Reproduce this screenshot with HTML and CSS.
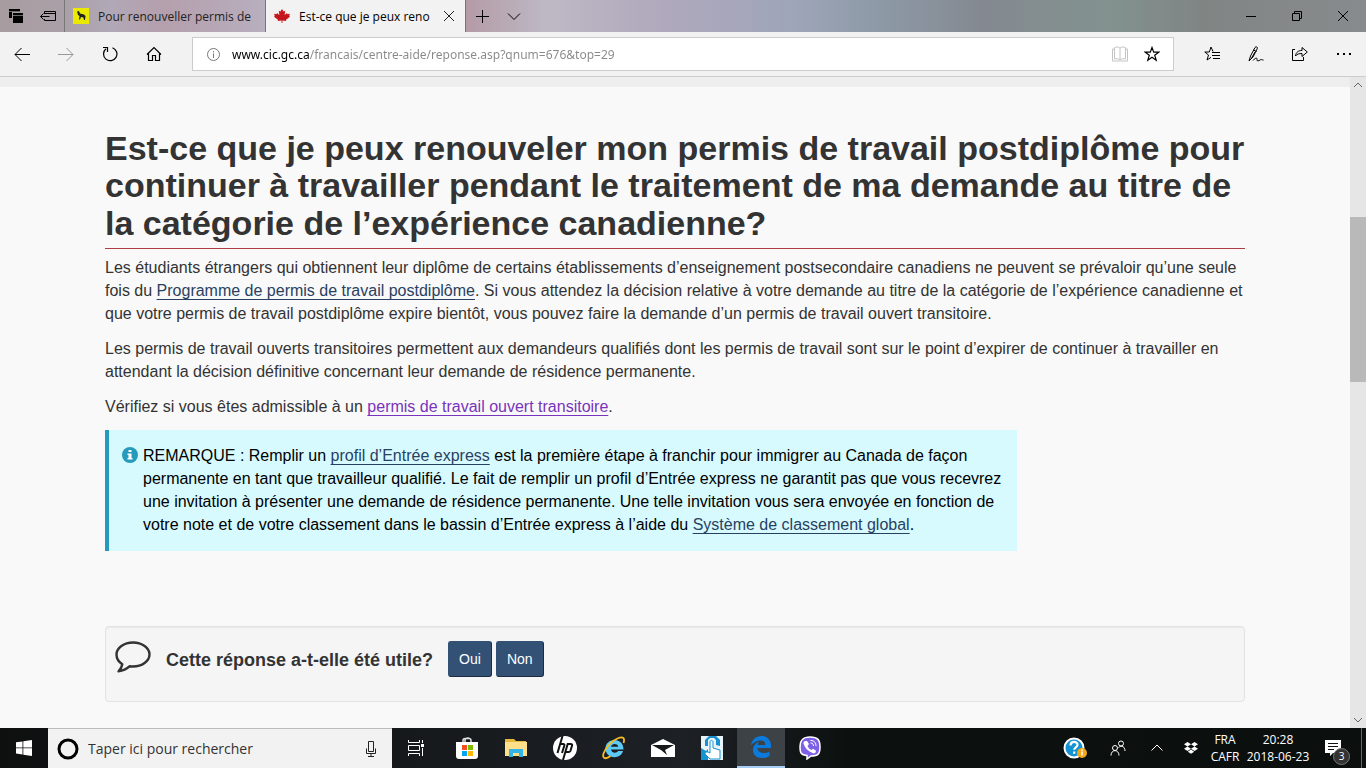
FILE: index.html
```html
<!DOCTYPE html>
<html lang="fr">
<head>
<meta charset="utf-8">
<title>Est-ce que je peux renouveler mon permis de travail postdiplôme</title>
<link rel="stylesheet" href="styles.css">
</head>
<body>
<header class="titlebar">
  <div class="tab-tools">
    <button class="icon-btn" aria-label="Onglets mis de côté"><svg width="16" height="16" viewBox="0 0 16 16"><path d="M1 1h11v3H4v6H1z"/><path d="M5 5h10v10H5z"/><path d="M1 3.500h11M5 7.500h10" stroke="#888" stroke-width=".8"/></svg></button>
    <button class="icon-btn" aria-label="Mettre les onglets de côté"><svg width="16" height="16" viewBox="0 0 16 16" class="line"><path d="M4.500 6V3.500h11v9h-11V11M4.500 5.500h11M.5 8.500h9M3.500 5.500l-3 3 3 3"/></svg></button>
  </div>
  <nav class="tabs" aria-label="Onglets">
    <a class="tab" href="#permis"><svg width="16" height="16" viewBox="0 0 16 16"><path fill="#eaea00" d="M0 0h16v16H0z"/><path fill="#222" d="M4 3.500l2-.5 1 2.500 4 1 1.500 1.500-.5 4h-1l-.6-2.500L8 9l-1 2.500H6L6.500 8 5 7 4.500 5z"/></svg><span>Pour renouveller permis de</span></a>
    <div class="tab active"><svg width="16" height="16" viewBox="0 0 18 16"><path fill="#c4161c" d="M9 0l1.800 3 1.800-1-.6 5 2.600-2.500.6 1.400L18 5.500l-.9 2.600.9.700-4.500 3.300.3 1.500-4.300-.5V16h-1v-2.900l-4.300.5.3-1.500L0 8.800l.9-.7L0 5.500l2.800.4.6-1.400L6 7l-.6-5 1.800 1z"/></svg><a href="#reponse">Est-ce que je peux reno</a><button class="icon-btn tab-close" aria-label="Fermer l’onglet"><svg width="12" height="12" viewBox="0 0 12 12" class="line"><path d="M1 1l10 10M11 1L1 11"/></svg></button></div>
  </nav>
  <div class="tab-actions">
    <button class="icon-btn" aria-label="Nouvel onglet"><svg width="14" height="14" viewBox="0 0 14 14" class="line"><path d="M7.500 1v13M1 7.500h13"/></svg></button>
    <button class="icon-btn" aria-label="Aperçus des onglets"><svg width="14" height="14" viewBox="0 0 14 14" class="line"><path d="M1 4.500l6 6 6-6"/></svg></button>
  </div>
  <div class="window-actions">
    <button class="icon-btn" aria-label="Réduire"><svg width="10" height="10" viewBox="0 0 10 10" class="line"><path d="M0 5.500h10"/></svg></button>
    <button class="icon-btn" aria-label="Restaurer"><svg width="10" height="10" viewBox="0 0 10 10" class="line"><path d="M.5 2.500h7v7h-7zM2.500 2.500v-2h7v7h-2"/></svg></button>
    <button class="icon-btn" aria-label="Fermer"><svg width="10" height="10" viewBox="0 0 10 10" class="line"><path d="M0 0l10 10M10 0L0 10"/></svg></button>
  </div>
</header>

<div class="toolbar">
  <div class="nav-buttons">
    <button class="icon-btn" aria-label="Précédent"><svg width="16" height="16" viewBox="0 0 16 16" class="line"><path d="M1 8.500h15M7.500 2L1 8.500 7.500 15"/></svg></button>
    <button class="icon-btn" aria-label="Suivant" disabled><svg width="16" height="16" viewBox="0 0 16 16" class="line"><path d="M0 8.500h15M8.500 2L15 8.500 8.500 15"/></svg></button>
    <button class="icon-btn" aria-label="Actualiser"><svg width="16" height="16" viewBox="0 0 16 16" class="line"><path d="M10.500 1.700A6.700 6.700 0 1 1 4 2.800M1 1.500h4.500V6" stroke-width="1.200"/></svg></button>
    <button class="icon-btn" aria-label="Accueil"><svg width="16" height="16" viewBox="0 0 16 16" class="line"><path d="M1 8.500l7-7 7 7M2.500 7.500v7h4v-5h3v5h4v-7" stroke-width="1.200"/></svg></button>
  </div>
  <form class="address">
    <svg width="13" height="13" viewBox="0 0 13 13" class="line address-info"><circle cx="6.500" cy="6.500" r="6"/><path d="M6.500 5.500V10M6.500 3v1.300"/></svg>
    <input class="address-input" type="text" aria-label="Adresse" value="www.cic.gc.ca/francais/centre-aide/reponse.asp?qnum=676&amp;top=29">
    <button type="button" class="icon-btn" aria-label="Mode lecture"><svg width="16" height="16" viewBox="0 0 16 16" class="line reading"><path d="M8 2v12M8 2C6 .8 4 .8 2.500 1.500v11.500c2-.6 4-.4 5.500.8 1.500-1.200 3.500-1.400 5.500-.8V1.500C12 .8 10 .8 8 2M2.500 3H.5v12h15V3h-2"/></svg></button>
    <button type="button" class="icon-btn" aria-label="Ajouter aux favoris"><svg width="16" height="16" viewBox="0 0 16 16" class="line star"><path d="M8 1.500l1.700 4.700h5l-4 3 1.500 5L8 11.300l-4.200 2.900 1.500-5-4-3h5z"/></svg></button>
  </form>
  <div class="hub-buttons">
    <button class="icon-btn" aria-label="Hub"><svg width="16" height="16" viewBox="0 0 16 16" class="line"><path d="M9 5.500L7 1 5.300 6H.8l3.700 3L3 14l4-2.600M8 6.500h8M8 9.500h8M9 12.500h7"/></svg></button>
    <button class="icon-btn" aria-label="Ajouter des notes"><svg width="16" height="16" viewBox="0 0 16 16" class="line"><path d="M1 15l1.500-5L7 1.500c1-1.500 3-.5 2.200 1.300L5 11l-4 4zM5.500 4l3 1.500M7 6l-4 7M5 14.500c2.500-3 4.500-3 4 -1s2 1.500 3 .5 2 0 3.500 0"/></svg></button>
    <button class="icon-btn" aria-label="Partager"><svg width="16" height="16" viewBox="0 0 16 16" class="line"><path d="M3 3.500H.5v11h11V11M3.500 10c.5-4 3-5.500 6.500-5.500V1.500L15.300 6 10 10.500v-3C7 7.500 5 8 3.500 10z"/></svg></button>
    <button class="icon-btn" aria-label="Paramètres et plus"><svg width="16" height="16" viewBox="0 0 16 16"><path d="M1 7h2v2H1zM7 7h2v2H7zM13 7h2v2h-2z"/></svg></button>
  </div>
</div>

<div class="viewport">
  <main class="page" id="reponse">
    <div class="page-strip"></div>
    <div class="container">
      <h1>Est-ce que je peux renouveler mon permis de travail postdiplôme pour continuer à travailler pendant le traitement de ma demande au titre de la catégorie de l’expérience canadienne?</h1>
      <p>Les étudiants étrangers qui obtiennent leur diplôme de certains établissements d’enseignement postsecondaire canadiens ne peuvent se prévaloir qu’une seule fois du <a href="#programme">Programme de permis de travail postdiplôme</a>. Si vous attendez la décision relative à votre demande au titre de la catégorie de l’expérience canadienne et que votre permis de travail postdiplôme expire bientôt, vous pouvez faire la demande d’un permis de travail ouvert transitoire.</p>
      <p>Les permis de travail ouverts transitoires permettent aux demandeurs qualifiés dont les permis de travail sont sur le point d’expirer de continuer à travailler en attendant la décision définitive concernant leur demande de résidence permanente.</p>
      <p>Vérifiez si vous êtes admissible à un <a class="seen" href="#transitoire">permis de travail ouvert transitoire</a>.</p>
      <section class="note">
        <svg class="note-icon" width="16" height="16" viewBox="0 0 16 16"><circle cx="8" cy="8" r="8" fill="#269abc"/><path fill="#fff" d="M6.500 3h3v2h-3zM5.500 6.500h4v4.500h1v1.500h-5V11h1V8h-1z"/></svg>
        <p>REMARQUE : Remplir un <a href="#profil">profil d’Entrée express</a> est la première étape à franchir pour immigrer au Canada de façon permanente en tant que travailleur qualifié. Le fait de remplir un profil d’Entrée express ne garantit pas que vous recevrez une invitation à présenter une demande de résidence permanente. Une telle invitation vous sera envoyée en fonction de votre note et de votre classement dans le bassin d’Entrée express à l’aide du <a href="#classement">Système de classement global</a>.</p>
      </section>
      <section class="well">
        <svg class="bubble" width="36" height="32" viewBox="0 0 36 32"><path d="M18 1.500C27 1.500 34.500 7 34.500 13.500S27 25.500 18 25.500c-1 0-2.200-.1-3.200-.3-3 2.800-6.500 4.600-11.300 5.100 2-1.800 3.300-4 3.800-7C3.800 21 1.500 17.500 1.500 13.500 1.500 7 9 1.500 18 1.500z" fill="none" stroke="#333" stroke-width="2.400" stroke-linejoin="round"/></svg>
        <h2>Cette réponse a-t-elle été utile?</h2>
        <div class="answers"><button class="btn">Oui</button><button class="btn">Non</button></div>
      </section>
    </div>
  </main>
  <div class="scrollbar" aria-hidden="true">
    <svg width="16" height="16" viewBox="0 0 16 16" class="line"><path d="M4 10l4-4 4 4"/></svg>
    <div class="track-before"></div>
    <div class="thumb"></div>
    <div class="track-after"></div>
    <svg width="16" height="16" viewBox="0 0 16 16" class="line"><path d="M4 6l4 4 4-4"/></svg>
  </div>
</div>

<footer class="taskbar">
  <button class="task start" aria-label="Démarrer"><svg width="16" height="16" viewBox="0 0 16 16" fill="#fff"><path d="M0 2.300l6.500-.9v6.100H0zM7.300 1.300L16 0v7.500H7.300zM0 8.300h6.500v6.200L0 13.600zM7.300 8.300H16V16l-8.700-1.300z"/></svg></button>
  <form class="search">
    <svg width="22" height="22" viewBox="0 0 22 22"><circle cx="11" cy="11" r="9" fill="none" stroke="#000" stroke-width="3"/></svg>
    <input type="text" aria-label="Rechercher" placeholder="Taper ici pour rechercher">
    <svg width="12" height="18" viewBox="0 0 12 18" class="line"><path d="M3.500 1.500h5v10h-5zM1.500 8.500v5h9v-5M6 13.500v3M3 16.500h6"/></svg>
  </form>
  <nav class="tasks" aria-label="Applications">
    <button class="task view" aria-label="Affichage des tâches"><svg width="18" height="16" viewBox="0 0 18 16" class="line light"><path d="M1.500 0v2.500h11V0M1.500 5.500h11v5h-11zM1.500 16v-2.500h11V16M15.500 0v3M15.500 8v8"/><path d="M14 4h3v3h-3z" fill="#fff" stroke="none"/></svg></button>
    <button class="task" aria-label="Microsoft Store"><svg width="24" height="24" viewBox="0 0 24 24"><path d="M8 7V4.500a2 2 0 0 1 2-2h4a2 2 0 0 1 2 2V7M10 6V4a3 3 0 0 1 5-1" fill="none" stroke="#ddd" stroke-width="1.500"/><path fill="#fff" d="M1 6h22v14c0 2-1 3-3 3H4c-2 0-3-1-3-3z"/><path fill="#f25022" d="M7 9h5v5H7z"/><path fill="#7fba00" d="M13 9h5v5h-5z"/><path fill="#00a4ef" d="M7 15h5v5H7z"/><path fill="#ffb900" d="M13 15h5v5h-5z"/></svg></button>
    <button class="task" aria-label="Explorateur de fichiers"><svg width="24" height="20" viewBox="0 0 24 20"><path fill="#e8b83e" d="M1 1h9l2 2h10v4H1z"/><path fill="#ffe08a" d="M1 4h22v14H1z"/><path fill="#35b4e8" d="M5 11h14v8h-4v-4H9v4H5z"/></svg></button>
    <button class="task" aria-label="HP"><svg width="24" height="24" viewBox="0 0 24 24"><circle cx="12" cy="12" r="12" fill="#fff"/><path d="M9.500 0L4.500 17M7.200 8h3q1.600 0 1.100 1.700L9 17M10 24L14.700 8h3q1.800 0 1.300 1.700l-1.600 5.300Q17 16 15.500 16H13" fill="none" stroke="#111" stroke-width="2"/></svg></button>
    <button class="task" aria-label="Internet Explorer"><svg width="24" height="24" viewBox="0 0 24 24"><path fill="#5ccaf5" d="M3.500 12.500C3.500 7.500 7.500 4 12.500 4s9 3.500 9 9.500H9c.3 2 1.700 3.200 3.800 3.200 1.500 0 2.600-.6 3.200-1.700h5c-1.200 4-4.500 6.200-8.500 6.200-5.200 0-9-3.700-9-8.700zM9 10.700h7.300C16 8.900 14.600 8 12.700 8S9.500 9 9 10.700z"/><path d="M8.500 20C4 23.500 0 23 1.500 17.500 3.500 11 11 4 16.500 2c5-1.800 6.500.5 5 5" fill="none" stroke="#f5bd25" stroke-width="1.800"/></svg></button>
    <button class="task" aria-label="Courrier"><svg width="24" height="20" viewBox="0 0 24 20"><path fill="#fff" d="M0 7l12-6 12 6v12H0z"/><path fill="#16191c" d="M1 7h22l-9 5 2 5-6-5z"/></svg></button>
    <button class="task" aria-label="Assistant tactile"><svg width="22" height="24" viewBox="0 0 22 24"><path fill="#e9f4fa" d="M0 0h22v24H0z"/><path fill="#1592cf" d="M0 24V12l5 3 2-2v11zM15 9V4l-2-2H9L7 4v6H4V4l4-4h7l4 4v6z"/><path fill="#fff" stroke="#1592cf" d="M9 17V6c0-2 3-2 3 0v6l7 2v9H9l-5-5c0-2 2-3 5-1z"/></svg></button>
    <button class="task current" aria-label="Microsoft Edge"><svg width="20" height="22" viewBox="0 0 20 22"><path fill="#0a7bdd" d="M0 9.500C1 3.500 5 0 10.500 0 16.500 0 20 4.500 20 9.500V12H6.500c.2 3.500 3 5 6 5 2.500 0 4.500-.7 6-1.600v4.500C16.600 21 14 22 11 22 5.500 22 2 18.800 2 14c0-4 2.500-6.800 6-8.200C7 7 6.600 8.200 6.500 9h7.800c0-2.700-1.300-4.500-4.600-4.500C6 4.500 2 6.500 0 9.500z"/></svg></button>
    <button class="task" aria-label="Viber"><svg width="24" height="24" viewBox="0 0 24 24"><path fill="#7d5fe8" stroke="#fff" stroke-width="1.500" d="M12 1c8 0 10 3 10 10s-2 9-9 9l-4 3v-3.500C3 19 2 17 2 11S4 1 12 1z"/><path fill="#fff" d="M7 5l2 0 2 3-1.500 2c1 2 2 3 4 4l1.500-1.300 3 2c0 2-1.500 3-3 2.500-5-2-8-5-9.500-9.500C5.200 6.500 6 5.500 7 5z"/><path d="M12.500 4.500c4 0 5.500 2.500 5.500 5.500M12.500 7c2 0 3 1 3 3" fill="none" stroke="#fff"/></svg></button>
  </nav>
  <div class="tray">
    <button class="tray-btn help" aria-label="Aide HP"><svg width="24" height="22" viewBox="0 0 24 22"><circle cx="11" cy="11" r="9.500" fill="#1592d0" stroke="#fff" stroke-width="2"/><path d="M7.500 8.500c0-5 7-4.500 7-.7 0 2.500-3.300 2.500-3.300 5M11.200 14.500v2.300" fill="none" stroke="#fff" stroke-width="2.200"/><circle cx="19" cy="16" r="5" fill="#f5a81c"/><path d="M19 14.500v4M19 12.300v1.400" stroke="#fff" stroke-width="1.500"/></svg></button>
    <button class="tray-btn people" aria-label="Contacts"><svg width="16" height="16" viewBox="0 0 16 16" class="line light"><circle cx="5" cy="8" r="2.500"/><path d="M1 15.500c0-6.500 8-6.500 8 0"/><circle cx="11" cy="3.500" r="2.500"/><path d="M8.500 7.500c3-2.500 6.500-1 6.500 3.500"/></svg></button>
    <button class="tray-btn hidden-icons" aria-label="Icônes cachées"><svg width="14" height="14" viewBox="0 0 14 14" class="line light"><path d="M1.500 9.500L7 4l5.500 5.500"/></svg></button>
    <button class="tray-btn dropbox" aria-label="Dropbox"><svg width="14" height="12" viewBox="0 0 14 12" fill="#fff"><path d="M3.500 0L7 2.200 3.500 4.400 0 2.200zM10.500 0L14 2.200l-3.500 2.200L7 2.200zM3.500 4.600L7 6.800 3.500 9 0 6.800zM10.500 4.600L14 6.800 10.500 9 7 6.800zM7 7.600l3.200 2.100L7 11.800 3.800 9.700z"/></svg></button>
    <button class="tray-btn lang"><span>FRA</span><span>CAFR</span></button>
    <button class="tray-btn clock"><span>20:28</span><span>2018-06-23</span></button>
    <button class="tray-btn notices" aria-label="3 notifications"><svg width="16" height="16" viewBox="0 0 16 16"><path fill="#fff" d="M0 0h16v13H8l-3 3v-3H0z"/><path stroke="#111" d="M3 3.500h10M3 6.500h10M3 9.500h6"/></svg><span class="count">3</span></button>
    <div class="show-desktop"></div>
  </div>
</footer>
</body>
</html>
```
FILE: styles.css
```css
* { box-sizing: border-box; }

body {
  margin: 0;
  height: 100vh;
  display: flex;
  flex-direction: column;
  overflow: hidden;
  background: #f9f9f9;
  color: #333;
  font: 16px/23px "Liberation Sans", Arial, sans-serif;
}

button, input { margin: 0; padding: 0; border: 0; background: none; color: inherit; font: inherit; }
svg { display: block; flex: none; }
.line { fill: none; stroke: currentColor; stroke-width: 1; }
.light { color: #fff; }
.icon-btn { display: flex; align-items: center; justify-content: center; flex: none; }

/* Title bar */
.titlebar, .toolbar, .taskbar { font-family: "Open Sans", "Noto Sans", sans-serif; }
.titlebar {
  display: flex;
  flex: none;
  height: 32px;
  color: #000;
  font-size: 12px;
  background: linear-gradient(90deg, #a69c9f 0, #aaa0a8 5%, #b1a8b7 8%, #b59fac 12%, #b8b0c0 20%, #b49aa5 34%, #bdb9c4 40%, #b1a9bd 48%, #9ea5b8 58%, #8e9aa8 64%, #848990 72%, #82928f 81%, #808584 88%, #888b8d 100%);
}
.tab-tools { display: flex; align-items: center; gap: 16px; width: 65px; padding-left: 8px; border-right: 1px solid #777; }
.tabs { display: flex; }
.tab { display: flex; align-items: center; gap: 9px; width: 200px; padding-left: 8px; color: #222; text-decoration: none; white-space: nowrap; }
.tab.active { width: 201px; background: #f2f2f2; border: solid #777; border-width: 0 1px; }
.tab a { color: #000; text-decoration: none; }
.tab-close { margin: 0 10px 0 auto; }
.tab-actions { display: flex; align-items: center; gap: 18px; padding-left: 9px; }
.window-actions { display: flex; margin-left: auto; }
.window-actions .icon-btn { width: 46px; }

/* Address bar */
.toolbar { display: flex; align-items: center; flex: none; height: 45px; background: #f2f2f2; border-bottom: 1px solid #ccc; color: #000; }
.nav-buttons { display: flex; gap: 28px; padding-left: 14px; }
.nav-buttons .icon-btn:disabled { color: #999; }
.address { display: flex; align-items: center; flex: 1; height: 34px; margin-left: 30px; padding: 0 13px 0 14px; background: #fff; border: 1px solid #ccc; }
.address-info { color: #777; }
.address-input {
  flex: 1;
  min-width: 0;
  margin-left: 12px;
  font-family: "Noto Sans", "Open Sans", sans-serif;
  font-size: 12px;
  color: transparent;
  background: linear-gradient(90deg, #000 78px, #888 78px);
  background-clip: text;
  -webkit-background-clip: text;
}
.address .icon-btn { margin-left: 16px; }
.reading { color: #c4c4c4; }
.star { stroke-width: 1.2; }
.hub-buttons { display: flex; gap: 28px; padding: 0 14px 0 30px; }

/* Page */
.viewport { display: flex; flex: 1; min-height: 0; }
.page { flex: 1; min-width: 0; overflow: hidden; }
.page-strip { height: 10px; background: #eee; }
.container { max-width: 1170px; margin: 0 auto; padding: 43px 15px 0; }
h1 { margin: 0 0 7px; padding-bottom: 6px; border-bottom: 1px solid #af3c43; font-size: 34px; line-height: 1.1; }
p { margin: 0 0 12px; }
p a { text-decoration-thickness: 1px; text-underline-offset: 3px; }
a { color: #284162; }
a.seen { color: #7834bc; }
.note { display: flex; gap: 5px; width: 80%; padding: 14px 15px 15px 13px; border-left: 4px solid #269abc; background: #d7faff; color: #000; }
.note-icon { margin-top: 3px; }
.note p { margin: 0; }
.well { display: flex; align-items: flex-start; min-height: 76px; margin-top: 75px; padding: 14px 9px; border: 1px solid #e3e3e3; border-radius: 4px; background: #f5f5f5; box-shadow: inset 0 1px 1px rgba(0, 0, 0, .05); }
h2 { margin: 0 15px; font-size: 18px; line-height: 38px; }
.answers { display: flex; gap: 4px; }
.btn { height: 36px; padding: 0 10px; border: 1px solid #335075; border-right-color: #1c2c42; border-bottom-color: #1c2c42; border-radius: 3px; background: #335075; color: #fff; font-size: 14px; }

.scrollbar { display: flex; flex-direction: column; flex: none; width: 16px; background: #e6e6e6; color: #666; }
.track-before { flex: 124; }
.thumb { flex: 165; background: #b9b9b9; }
.track-after { flex: 330; }

/* Task bar */
.taskbar { display: flex; flex: none; height: 40px; background: linear-gradient(90deg, #0d100f 0, #15191c 30%, #1d2025 50%, #0c1110 62%, #0b100f 100%); color: #fff; }
.task { display: flex; align-items: center; justify-content: center; flex: none; width: 48px; }
.view { margin-right: 2px; }
.current { background: #3d4247; border-bottom: 2px solid #a6cdf5; }
.search { display: flex; align-items: center; width: 344px; padding: 0 15px 0 9px; background: #f2f2f2; border-top: 1px solid #bbb; color: #222; }
.search input { flex: 1; min-width: 0; margin-left: 9px; font-size: 14px; }
.search input::placeholder { color: #333; opacity: 1; }
.tasks { display: flex; gap: 1px; }
.tray { display: flex; margin-left: auto; }
.tray-btn { display: flex; align-items: center; justify-content: center; width: 32px; font-size: 12px; line-height: 17px; }
.help { width: 44px; }
.people { width: 42px; }
.hidden-icons { width: 36px; }
.lang, .clock { flex-direction: column; width: 36px; }
.clock { width: 70px; }
.notices { position: relative; width: 48px; padding-right: 8px; }
.count { position: absolute; left: 20px; bottom: 3px; width: 17px; height: 17px; border: 1px solid #777; border-radius: 50%; background: #333; font-size: 10px; line-height: 15px; }
.show-desktop { width: 5px; border-left: 1px solid #666; }
```
